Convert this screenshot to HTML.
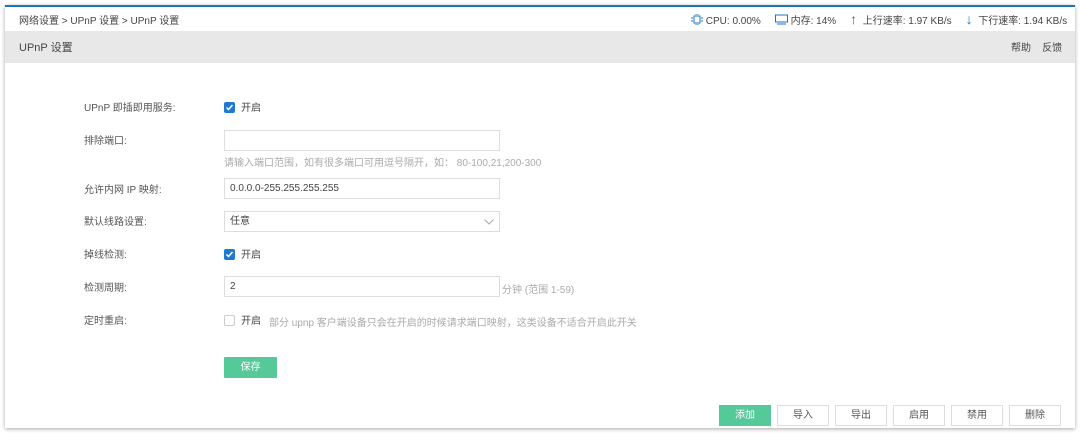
<!DOCTYPE html>
<html><head><meta charset="utf-8">
<style>
*{margin:0;padding:0;box-sizing:border-box}
body{width:1080px;height:433px;background:#fff;position:relative;overflow:hidden;font-family:"Liberation Sans","Noto Sans CJK SC",sans-serif;font-size:10px;color:#555}
.frame{position:absolute;left:5px;top:5px;width:1070px;height:423px;background:#fff;border-top:2px solid #1e74c0;box-shadow:0 1px 4px rgba(0,0,0,.35)}
.a{position:absolute;white-space:nowrap}
.hdr{position:absolute;left:0;top:24px;width:1070px;height:32px;background:#e8e8e8}
.inp{position:absolute;left:219px;width:276px;height:21px;border:1px solid #ddd;background:#fff;padding-left:5px;line-height:20px;color:#444}
.lbl{position:absolute;left:79px;color:#555}
.hint{color:#aaa}
.cb{position:absolute;left:219px;width:11px;height:11px;border-radius:2px}
.cbon{background:#1e7ad0}
.cboff{border:1px solid #ccc;background:#fff}
.btn{position:absolute;top:398px;width:52px;height:21px;border:1px solid #ddd;background:#fff;text-align:center;line-height:19px;color:#555}
.blue{color:#1e74c0}
.g{display:inline-block;width:14px}
</style></head><body>
<div class="frame">
<div class="a" style="left:14px;top:5px;color:#444">网络设置 &gt; UPnP 设置 &gt; UPnP 设置</div>
<div class="a" style="left:686px;top:4px;color:#444">
<svg width="12" height="11" viewBox="0 0 12 11" style="vertical-align:-1px"><rect x="3" y="2" width="6" height="7" fill="none" stroke="#1e74c0"/><path d="M0 4h2M0 7h2M10 4h2M10 7h2M5 0v1M7 0v1M5 10v1M7 10v1" stroke="#1e74c0"/></svg> CPU: 0.00%<span class="g"></span><svg width="13" height="11" viewBox="0 0 13 11" style="vertical-align:-1px"><rect x="0.5" y="1" width="12" height="7" fill="none" stroke="#1e74c0"/><path d="M2 10h9" stroke="#1e74c0"/></svg> 内存: 14%<span class="g"></span><span class="blue" style="font-size:14px">↑</span>&nbsp; 上行速率: 1.97 KB/s<span class="g"></span><span class="blue" style="font-size:14px">↓</span>&nbsp; 下行速率: 1.94 KB/s</div>
<div class="hdr">
<div class="a" style="left:14px;top:8px;font-size:11px;color:#444">UPnP 设置</div>
<div class="a" style="left:1006px;top:8px;color:#444">帮助&nbsp;&nbsp;&nbsp;&nbsp;反馈</div>
</div>
<div class="lbl a" style="top:92px">UPnP 即插即用服务:</div>
<div class="cb cbon" style="top:95px"><svg width="11" height="11" viewBox="0 0 11 11"><path d="M2.5 5.5l2 2 4-4.5" stroke="#fff" stroke-width="1.5" fill="none"/></svg></div>
<div class="a" style="left:236px;top:92px;color:#444">开启</div>

<div class="lbl a" style="top:125px">排除端口:</div>
<div class="inp" style="top:123px"></div>
<div class="a hint" style="left:219px;top:147px">请输入端口范围，如有很多端口可用逗号隔开，如： 80-100,21,200-300</div>

<div class="lbl a" style="top:174px">允许内网 IP 映射:</div>
<div class="inp" style="top:171px">0.0.0.0-255.255.255.255</div>

<div class="lbl a" style="top:206px">默认线路设置:</div>
<div class="inp" style="top:204px">任意<svg style="position:absolute;right:5px;top:7px" width="10" height="6" viewBox="0 0 10 6"><path d="M0.5 0.5l4.5 4.5 4.5-4.5" stroke="#aaa" fill="none"/></svg></div>

<div class="lbl a" style="top:239px">掉线检测:</div>
<div class="cb cbon" style="top:242px"><svg width="11" height="11" viewBox="0 0 11 11"><path d="M2.5 5.5l2 2 4-4.5" stroke="#fff" stroke-width="1.5" fill="none"/></svg></div>
<div class="a" style="left:236px;top:239px;color:#444">开启</div>

<div class="lbl a" style="top:272px">检测周期:</div>
<div class="inp" style="top:269px">2</div>
<div class="a hint" style="left:497px;top:274px">分钟 (范围 1-59)</div>

<div class="lbl a" style="top:305px">定时重启:</div>
<div class="cb cboff" style="top:308px"></div>
<div class="a" style="left:236px;top:305px;color:#444">开启</div>
<div class="a hint" style="left:264px;top:307px">部分 upnp 客户端设备只会在开启的时候请求端口映射，这类设备不适合开启此开关</div>

<div class="a" style="left:219px;top:350px;width:53px;height:21px;background:#55c99a;color:#fff;text-align:center;line-height:21px;border-radius:1px">保存</div>

<div class="btn" style="left:714px;background:#55c99a;border-color:#55c99a;color:#fff">添加</div>
<div class="btn" style="left:772px">导入</div>
<div class="btn" style="left:830px">导出</div>
<div class="btn" style="left:888px">启用</div>
<div class="btn" style="left:946px">禁用</div>
<div class="btn" style="left:1004px">删除</div>
</div>
</body></html>
